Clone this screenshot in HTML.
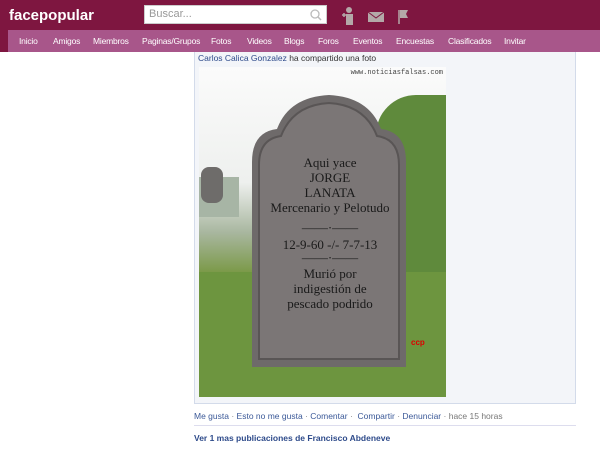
<!DOCTYPE html>
<html><head><style>
*{margin:0;padding:0;box-sizing:border-box}
body{width:600px;height:450px;background:#fff;font-family:"Liberation Sans",sans-serif;position:relative;overflow:hidden}
.top{position:absolute;left:0;top:0;width:600px;height:52px;background:#7e1640}
.logo{position:absolute;left:9px;top:7px;color:#fff;font-weight:bold;font-size:15px}
.search{position:absolute;left:144px;top:5px;width:183px;height:19px;background:#fff;border:1px solid #ccc;font-size:11px;color:#999;padding:2px 4px}
.nav{position:absolute;left:8px;top:30px;width:592px;height:22px;background:#a8568a}
.nav span{position:absolute;top:6px;font-size:8.5px;color:#fff;letter-spacing:-0.2px}
.box{position:absolute;left:194px;top:52px;width:382px;height:352px;background:#f3f5f9;border:1px solid #d3dbea;border-top:none}
.img{position:absolute;left:199px;top:67px;width:247px;height:330px;overflow:hidden;background:linear-gradient(#fbfbfb 0%,#eef0ee 35%,#a9b7a0 50%,#7c9a4a 62%,#6f9340 100%)}
.t{font-family:"Liberation Serif",serif;color:#1a1a1a;text-align:center;position:absolute;left:51px;width:160px;font-size:13px}
</style></head><body>
<div class="top"></div>
<div class="logo">facepopular</div>
<div class="search">Buscar...<svg style="position:absolute;right:4px;top:3px" width="12" height="12"><circle cx="5" cy="5" r="4" fill="none" stroke="#bbb" stroke-width="1.3"/><path d="M8 8l3 3" stroke="#bbb" stroke-width="1.5"/></svg></div>
<svg style="position:absolute;left:342px;top:6px" width="70" height="20">
<circle cx="7" cy="4" r="3" fill="#b4a8a8"/><rect x="4" y="8" width="7" height="11" fill="#b4a8a8"/><path d="M0 9h4M2 7v4" stroke="#b4a8a8" stroke-width="1.5"/>
<rect x="26" y="6" width="16" height="10" fill="#b4a8a8"/><path d="M26 6l8 6 8-6" stroke="#7e1640" fill="none"/>
<path d="M57 4v14" stroke="#b4a8a8" stroke-width="1.5"/><path d="M58 4h8l-2 4 2 4h-8z" fill="#b4a8a8"/>
</svg>
<div class="nav">
<span style="left:11px">Inicio</span><span style="left:45px">Amigos</span><span style="left:85px">Miembros</span><span style="left:134px">Paginas/Grupos</span><span style="left:203px">Fotos</span><span style="left:239px">Videos</span><span style="left:276px">Blogs</span><span style="left:310px">Foros</span><span style="left:345px">Eventos</span><span style="left:388px">Encuestas</span><span style="left:440px">Clasificados</span><span style="left:496px">Invitar</span>
</div>
<div class="box"></div>
<div style="position:absolute;left:198px;top:53px;font-size:8.5px;color:#333"><span style="color:#2d4a8a">Carlos Calica Gonzalez</span> ha compartido una foto</div>
<div class="img">
<div style="position:absolute;right:0;top:28px;width:70px;height:230px;background:#5f8a3c;border-radius:40px 0 0 0"></div>
<div style="position:absolute;left:0;top:110px;width:40px;height:40px;background:#a7b5a5"></div>
<div style="position:absolute;left:0;top:205px;width:247px;height:125px;background:#6d953f"></div>
<svg style="position:absolute;left:0;top:0" width="247" height="330">
<path d="M53 95 Q53 65 78 62 Q90 30 130 28 Q170 30 182 62 Q207 65 207 95 L207 300 L53 300 Z" fill="#6e6a6a"/>
<path d="M60 98 Q60 72 82 69 Q94 38 130 36 Q166 38 178 69 Q200 72 200 98 L200 292 L60 292 Z" fill="#7b7676" stroke="#595555" stroke-width="2"/>
<rect x="2" y="100" width="22" height="36" rx="8" fill="#6e6c6a"/>
<text x="212" y="278" font-size="8" fill="#d00" font-family="Liberation Sans" font-weight="bold">ccp</text>
</svg>
<div style="position:absolute;right:3px;top:2px;font-family:'Liberation Mono',monospace;font-size:7px;color:#444">www.noticiasfalsas.com</div>
<div class="t" style="top:88px;line-height:15px">Aqui yace<br>JORGE<br>LANATA<br>Mercenario y Pelotudo</div>
<div class="t" style="top:153px">——·——</div>
<div class="t" style="top:170px">12-9-60 -/- 7-7-13</div>
<div class="t" style="top:183px">——·——</div>
<div class="t" style="top:199px;line-height:15px">Murió por<br>indigestión de<br>pescado podrido</div>
</div>
<div style="position:absolute;left:194px;top:411px;font-size:8.5px;color:#3b5998;word-spacing:0">Me gusta <span style="color:#888">·</span> Esto no me gusta <span style="color:#888">·</span> Comentar <span style="color:#888">·</span>&nbsp; Compartir <span style="color:#888">·</span> Denunciar <span style="color:#888">·</span> <span style="color:#777">hace 15 horas</span></div>
<div style="position:absolute;left:194px;top:425px;width:382px;border-top:1px solid #dde"></div>
<div style="position:absolute;left:194px;top:433px;font-size:8.5px;font-weight:bold;color:#2d4a8a">Ver 1 mas publicaciones de Francisco Abdeneve</div>
</body></html>
